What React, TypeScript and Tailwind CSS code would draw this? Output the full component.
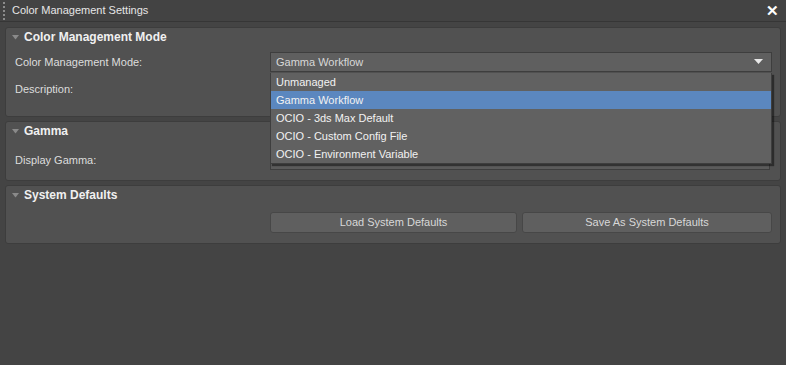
import { useState } from 'react'

const MODES = [
  'Unmanaged',
  'Gamma Workflow',
  'OCIO - 3ds Max Default',
  'OCIO - Custom Config File',
  'OCIO - Environment Variable',
]

const Caret = () => (
  <svg width="7" height="5" viewBox="0 0 7 5" className="shrink-0">
    <path d="M0 0 H7 L3.5 4.5 Z" fill="#8a8a8a" />
  </svg>
)

const PanelHeader = ({ title }: { title: string }) => (
  <div className="h-[18px] flex items-center gap-[5px] pl-[6px]">
    <Caret />
    <span className="font-bold text-[12px] text-[#f0f0f0]">{title}</span>
  </div>
)

export default function App() {
  const [mode, setMode] = useState('Gamma Workflow')

  return (
    <div
      className="w-[786px] h-[365px] bg-[#444444] flex flex-col text-[11px] text-[#dddddd] overflow-hidden"
      style={{ fontFamily: '"Liberation Sans", Arial, sans-serif' }}
    >
      {/* titelbalk */}
      <div className="h-[22px] flex items-center border-b border-[#363636] bg-[#434343]">
        <div className="ml-[3px] w-[2px] h-[18px] border-l-2 border-dotted border-[#8c8c8c]" />
        <span className="ml-[7px] text-[#e6e6e6]">Color Management Settings</span>
        <span className="ml-auto mr-[7px] text-white font-bold text-[15px] leading-none">✕</span>
      </div>

      <div className="flex flex-col gap-[4px] px-[5px] pt-[5px]">
        {/* Color Management Mode */}
        <div className="h-[90px] bg-[#515151] border border-[#3d3d3d] rounded-[3px] flex flex-col">
          <PanelHeader title="Color Management Mode" />
          <div className="flex items-center mt-[6px] h-[20px]">
            <span className="w-[264px] pl-[9px]">Color Management Mode:</span>
            <div className="relative w-[502px]">
              <div className="h-[20px] bg-[#5f5f5f] border border-[#3e3e3e] flex items-center pl-[5px] pr-[8px] text-[#d8d8d8]">
                <span>{mode}</span>
                <svg width="9" height="6" viewBox="0 0 9 6" className="ml-auto">
                  <path d="M0 0 H9 L4.5 5 Z" fill="#e8e8e8" />
                </svg>
              </div>
              <div className="absolute left-0 top-[21px] w-[502px] bg-[#616161] border border-[#3e3e3e] border-t-0 shadow-[2px_2px_1px_rgba(0,0,0,0.45)] z-10">
                {MODES.map((m) => (
                  <div
                    key={m}
                    onClick={() => setMode(m)}
                    className={`h-[18px] flex items-center pl-[5px] text-[#f2f2f2] ${
                      m === mode ? 'bg-[#5b87bf]' : ''
                    }`}
                  >
                    {m}
                  </div>
                ))}
              </div>
            </div>
          </div>
          <div className="flex items-center h-[18px] mt-[8px]">
            <span className="pl-[9px]">Description:</span>
          </div>
        </div>

        {/* Gamma */}
        <div className="h-[60px] bg-[#515151] border border-[#3d3d3d] rounded-[3px] flex flex-col">
          <PanelHeader title="Gamma" />
          <div className="flex items-center mt-[10px] h-[20px]">
            <span className="w-[264px] pl-[9px]">Display Gamma:</span>
            <div className="w-[500px] h-[19px] bg-[#5b5b5b] border border-[#3e3e3e]" />
          </div>
        </div>

        {/* System Defaults */}
        <div className="h-[59px] bg-[#515151] border border-[#3d3d3d] rounded-[3px] flex flex-col">
          <PanelHeader title="System Defaults" />
          <div className="flex items-center gap-[5px] mt-[8px] pl-[264px]">
            <button className="w-[247px] h-[21px] bg-[#5f5f5f] border border-[#474747] rounded-[3px] text-[#d8d8d8]">
              Load System Defaults
            </button>
            <button className="w-[250px] h-[21px] bg-[#5f5f5f] border border-[#474747] rounded-[3px] text-[#d8d8d8]">
              Save As System Defaults
            </button>
          </div>
        </div>
      </div>
    </div>
  )
}
